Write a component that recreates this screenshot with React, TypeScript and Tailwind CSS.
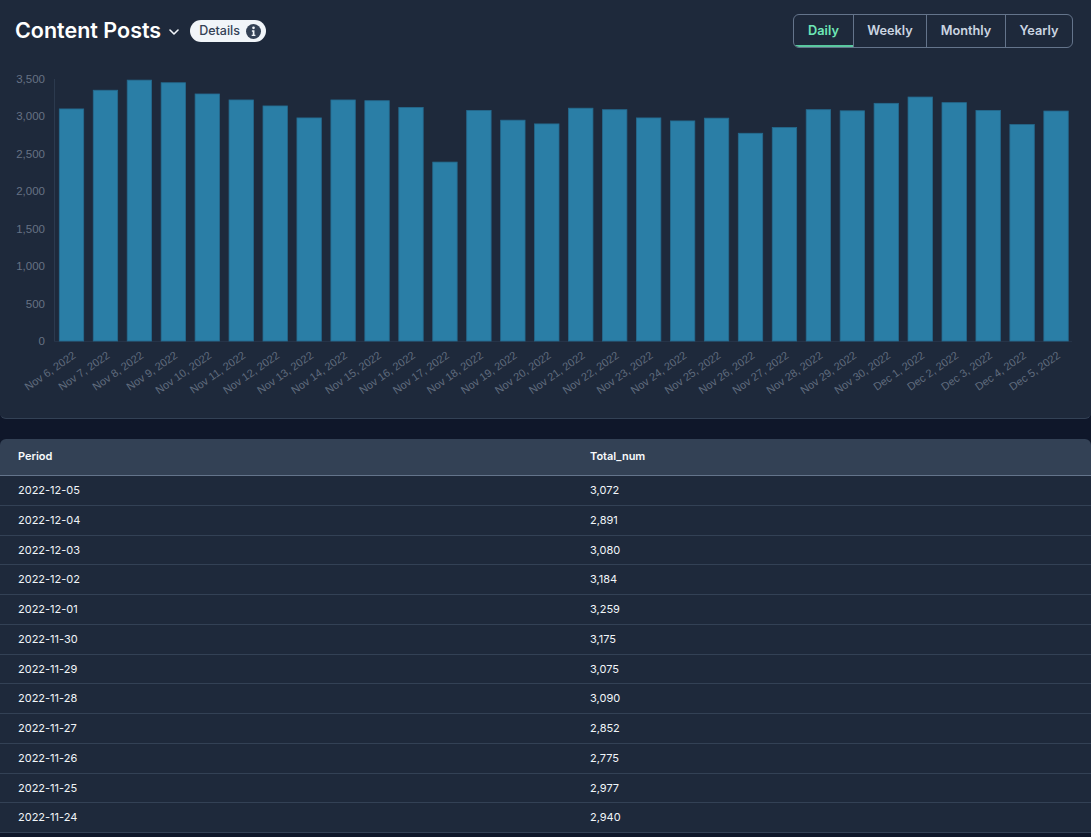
const bars: [string, number][] = [
  ["Nov 6, 2022", 3100], ["Nov 7, 2022", 3350], ["Nov 8, 2022", 3485], ["Nov 9, 2022", 3450],
  ["Nov 10, 2022", 3300], ["Nov 11, 2022", 3220], ["Nov 12, 2022", 3140], ["Nov 13, 2022", 2980],
  ["Nov 14, 2022", 3220], ["Nov 15, 2022", 3210], ["Nov 16, 2022", 3120], ["Nov 17, 2022", 2390],
  ["Nov 18, 2022", 3080], ["Nov 19, 2022", 2950], ["Nov 20, 2022", 2900], ["Nov 21, 2022", 3110],
  ["Nov 22, 2022", 3090], ["Nov 23, 2022", 2980], ["Nov 24, 2022", 2940], ["Nov 25, 2022", 2977],
  ["Nov 26, 2022", 2775], ["Nov 27, 2022", 2852], ["Nov 28, 2022", 3090], ["Nov 29, 2022", 3075],
  ["Nov 30, 2022", 3175], ["Dec 1, 2022", 3259], ["Dec 2, 2022", 3184], ["Dec 3, 2022", 3080],
  ["Dec 4, 2022", 2891], ["Dec 5, 2022", 3072],
];

const rows: [string, string][] = [
  ["2022-12-05", "3,072"], ["2022-12-04", "2,891"], ["2022-12-03", "3,080"], ["2022-12-02", "3,184"],
  ["2022-12-01", "3,259"], ["2022-11-30", "3,175"], ["2022-11-29", "3,075"], ["2022-11-28", "3,090"],
  ["2022-11-27", "2,852"], ["2022-11-26", "2,775"], ["2022-11-25", "2,977"], ["2022-11-24", "2,940"],
];

const ticks = [0, 500, 1000, 1500, 2000, 2500, 3000, 3500];
const base = 341;
const scale = 262 / 3500;
const axisFont = "'Liberation Sans', Arial, sans-serif";

function Chart() {
  return (
    <svg width="1091" height="348" viewBox="0 70 1091 348" className="block">
      {ticks.map((t) => (
        <text key={t} x="45" y={base - t * scale + 4} textAnchor="end" fontSize="11.5" fontFamily={axisFont} fill="#667284">
          {t.toLocaleString("en-US")}
        </text>
      ))}
      <line x1="54.5" y1="79" x2="54.5" y2="342" stroke="#2c3a4e" />
      <line x1="54" y1="341.5" x2="1072" y2="341.5" stroke="#263347" />
      {bars.map(([label, v], i) => {
        const x = 59.3 + i * 33.95;
        const y = base - v * scale;
        const cx = x + 12.2;
        return (
          <g key={label}>
            <rect x={x} y={y} width="24.4" height={base - y} fill="#2a7ea6" stroke="#256a8e" strokeWidth="0.8" />
            <text
              x={cx + 5}
              y="357"
              textAnchor="end"
              fontSize="11"
              fontFamily={axisFont}
              fill="#606c7e"
              transform={`rotate(-35 ${cx + 5} 357)`}
            >
              {label}
            </text>
          </g>
        );
      })}
    </svg>
  );
}

export default function App() {
  return (
    <div className="h-[837px] w-[1091px] overflow-hidden bg-[#0f172a] font-['Inter',sans-serif]">
      <section className="h-[419px] rounded-b-md border-b border-[#334155] bg-[#1e293b]">
        <header className="flex h-[70px] items-start justify-between pl-[15px] pr-[18px] pt-[14px]">
          <div className="flex h-[34px] items-center">
            <h1 className="text-[21.5px] font-semibold leading-none text-white">Content Posts</h1>
            <svg width="10" height="6" viewBox="0 0 10 6" fill="none" stroke="#f1f5f9" strokeWidth="1.6" className="ml-[8px] mt-[1px]">
              <path d="M1 1l4 4 4-4" strokeLinecap="round" strokeLinejoin="round" />
            </svg>
            <div className="ml-[11px] flex h-[22px] w-[76px] items-center justify-between rounded-full bg-[#f1f5f9] pl-[9px] pr-[5px]">
              <span className="text-[12.5px] font-medium text-[#334155]">Details</span>
              <svg width="15" height="15" viewBox="0 0 14 14">
                <circle cx="7" cy="7" r="7" fill="#334155" />
                <circle cx="7" cy="3.6" r="1.25" fill="#f1f5f9" />
                <path d="M5.5 5.9h2.4v4.1h.9v1.3H5.3V10h1V7.2h-.8z" fill="#f1f5f9" />
              </svg>
            </div>
          </div>
          <div className="flex h-[34px] overflow-hidden rounded-md border border-[#64748b]">
            {["Daily", "Weekly", "Monthly", "Yearly"].map((t, i) => (
              <div
                key={t}
                className={
                  i === 0
                    ? "flex w-[59px] items-center justify-center border-b-2 border-[#5ac8a0] pt-[2px] text-[12.75px] font-semibold text-[#6ee7b7]"
                    : i === 1
                      ? "flex w-[73px] items-center justify-center border-l border-[#64748b] text-[12.75px] font-semibold text-[#cbd5e1]"
                      : i === 2
                        ? "flex w-[79px] items-center justify-center border-l border-[#64748b] text-[12.75px] font-semibold text-[#cbd5e1]"
                        : "flex w-[67px] items-center justify-center border-l border-[#64748b] text-[12.75px] font-semibold text-[#cbd5e1]"
                }
              >
                {t}
              </div>
            ))}
          </div>
        </header>
        <Chart />
      </section>
      <section className="mt-[20px]">
        <div className="flex h-[37px] items-center rounded-t-md border-b border-[#64748b] bg-[#334155] pb-[2px] text-[11px] font-semibold text-[#f8fafc]">
          <div className="w-[590px] pl-[18px]">Period</div>
          <div>Total_num</div>
        </div>
        {rows.map(([p, n]) => (
          <div key={p} className="flex h-[29.75px] items-center border-b border-[#334155] bg-[#1e293b] text-[11px] text-[#f1f5f9]">
            <div className="w-[590px] pl-[18px]">{p}</div>
            <div>{n}</div>
          </div>
        ))}
      </section>
    </div>
  );
}
